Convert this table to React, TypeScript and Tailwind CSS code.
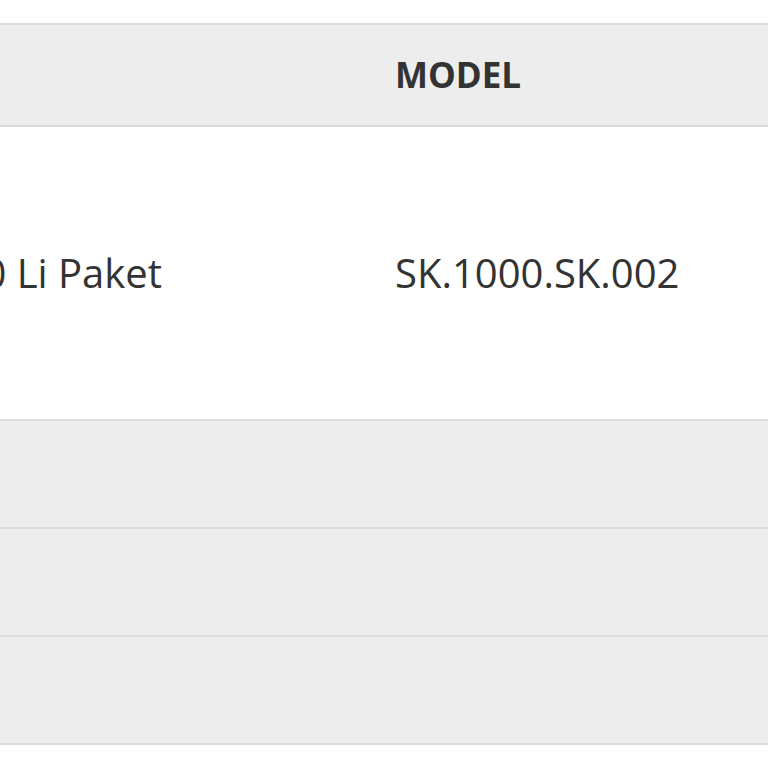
import React from 'react';

interface Row {
  name: string;
  model: string;
  tall?: boolean;
  striped?: boolean;
}

const rows: Row[] = [
  { name: 'SK 1000 Li Paket', model: 'SK.1000.SK.002', tall: true },
  { name: '', model: '', striped: true },
  { name: '', model: '', striped: true },
  { name: '', model: '', striped: true },
];

const cellName = "w-[595px] shrink-0 pl-[58px] flex items-center";
const cellModel = "flex-1 flex items-center";

export default function App() {
  return (
    <div
      className="w-[768px] h-[768px] bg-white overflow-hidden pt-[23px] text-[#333333]"
      style={{ fontFamily: '"Open Sans", "Noto Sans", sans-serif' }}
    >
      <div className="ml-[-200px] w-[1200px]">
        {/* header */}
        <div className="flex h-[104px] bg-[#ededed] border-y-2 border-[#dcdcdc]">
          <div className={cellName} />
          <div className={cellModel}>
            <span className="text-[35px] font-bold uppercase">Model</span>
          </div>
        </div>

        {rows.map((r, i) => (
          <div
            key={i}
            className={
              "flex border-b-2 border-[#dcdcdc] " +
              (r.tall ? "h-[294px] " : "h-[108px] ") +
              (r.striped ? "bg-[#ededed]" : "bg-white")
            }
          >
            <div className={cellName}>
              <span className="text-[40px] whitespace-nowrap">{r.name}</span>
            </div>
            <div className={cellModel}>
              <span className="text-[40px] whitespace-nowrap">{r.model}</span>
            </div>
          </div>
        ))}
      </div>
    </div>
  );
}
